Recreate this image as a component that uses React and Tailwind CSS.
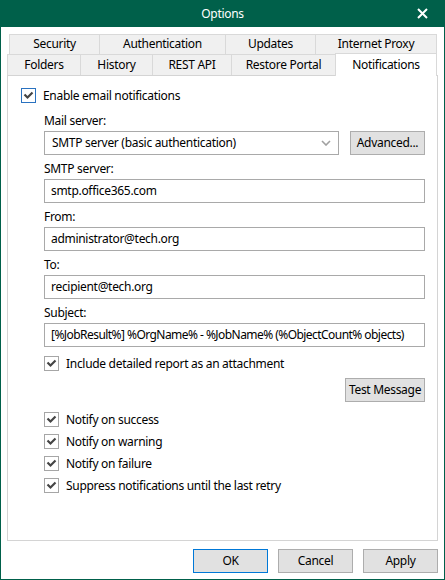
import React, { useState } from 'react';

const font = { fontFamily: '"Noto Sans", "Segoe UI", sans-serif' };

function Check({ checked, focused, onClick }) {
  return (
    <span
      onClick={onClick}
      className={`flex h-[15px] w-[15px] shrink-0 items-center justify-center border bg-white ${focused ? 'border-[#2a72c0]' : 'border-[#a6a6a6]'}`}
    >
      {checked && (
        <svg width="13" height="13" viewBox="0 0 13 13">
          <path d="M2.5 5.5 L5.5 8.5 L10.5 3.5" fill="none" stroke="#454545" strokeWidth="2.2" />
        </svg>
      )}
    </span>
  );
}

function CheckRow({ label, checked, onToggle, focused, className = '' }) {
  return (
    <div className={`flex h-[15px] items-center gap-[7px] ${className}`}>
      <Check checked={checked} focused={focused} onClick={onToggle} />
      <span className="leading-[15px] text-black">{label}</span>
    </div>
  );
}

function Field({ label, value, className = '', tight }) {
  return (
    <div className={className}>
      <div className="h-[16px] leading-[16px] text-black">{label}</div>
      <div
        className={`mt-[2px] flex h-[24px] items-center overflow-hidden whitespace-nowrap border border-[#a9a9a9] bg-white pl-[6px] text-black ${tight ? 'tracking-[-0.55px]' : ''}`}
      >
        {value}
      </div>
    </div>
  );
}

function WinButton({ children, primary, className = '' }) {
  return (
    <button
      className={`flex h-[24px] w-[75px] items-center justify-center border bg-[#e1e1e1] text-black ${primary ? 'border-[#0078d7]' : 'border-[#adadad]'} ${className}`}
    >
      {children}
    </button>
  );
}

const row1 = [
  ['Security', 90],
  ['Authentication', 126],
  ['Updates', 90],
  ['Internet Proxy', 122],
];
const row2 = [
  ['Folders', 73],
  ['History', 72],
  ['REST API', 79],
  ['Restore Portal', 104],
];

export default function App() {
  const [opts, setOpts] = useState({
    enable: true,
    attach: true,
    success: true,
    warning: true,
    failure: true,
    suppress: true,
  });
  const toggle = (k) => setOpts((o) => ({ ...o, [k]: !o[k] }));

  return (
    <div style={font} className="flex h-[580px] w-[445px] flex-col border-x border-b border-[#00604a] bg-white text-[12px] tracking-[-0.3px]">
      {/* title bar */}
      <div className="-mx-px flex h-[27px] shrink-0 items-center bg-[#00604a] text-white">
        <div className="flex-1 pl-[45px] text-center text-[12px]">Options</div>
        <div className="flex w-[45px] items-center justify-center">
          <svg width="11" height="11" viewBox="0 0 11 11">
            <path d="M1 1 L10 10 M10 1 L1 10" stroke="#fff" strokeWidth="2" />
          </svg>
        </div>
      </div>

      {/* tabs */}
      <div className="mt-[7px] flex h-[20px] pl-[8px]">
        {row1.map(([t, w], i) => (
          <div
            key={t}
            style={{ width: w }}
            className={`flex items-center justify-center border-t border-l border-[#d9d9d9] bg-[#f0f0f0] pb-px text-black ${i === row1.length - 1 ? 'border-r' : ''}`}
          >
            {t}
          </div>
        ))}
      </div>
      <div className="flex h-[21px] items-end pl-[6px]">
        {row2.map(([t, w]) => (
          <div
            key={t}
            style={{ width: w }}
            className="flex h-[21px] items-center justify-center border-t border-l border-[#d9d9d9] bg-[#f0f0f0] text-black"
          >
            {t}
          </div>
        ))}
        <div className="relative z-10 -mb-px flex h-[23px] w-[102px] items-start justify-center border-x border-t border-[#d9d9d9] bg-white pt-[2px] text-black">
          Notifications
        </div>
      </div>

      {/* panel */}
      <div className="ml-[6px] h-[466px] w-[431px] shrink-0 border border-[#d4d4d4] bg-white">
        <CheckRow
          className="mt-[12px] ml-[13px]"
          label="Enable email notifications"
          checked={opts.enable}
          focused
          onToggle={() => toggle('enable')}
        />

        <div className="mt-[10px] ml-[36px] w-[381px]">
          <div className="h-[16px] leading-[16px] text-black">Mail server:</div>
          <div className="mt-[2px] flex h-[24px] gap-[11px]">
            <div className="flex w-[295px] items-center justify-between border border-[#a9a9a9] bg-white pl-[7px] pr-[7px] text-black">
              <span>SMTP server (basic authentication)</span>
              <svg width="10" height="6" viewBox="0 0 10 6">
                <path d="M1 1 L5 5 L9 1" fill="none" stroke="#a0a0a0" strokeWidth="1.6" />
              </svg>
            </div>
            <WinButton className="w-[75px]">Advanced...</WinButton>
          </div>

          <Field className="mt-[6px]" label="SMTP server:" value="smtp.office365.com" />
          <Field className="mt-[6px]" label="From:" value="administrator@tech.org" />
          <Field className="mt-[6px]" label="To:" value="recipient@tech.org" />
          <Field
            className="mt-[6px]"
            tight
            label="Subject:"
            value="[%JobResult%] %OrgName% - %JobName% (%ObjectCount% objects)"
          />

          <CheckRow
            className="mt-[9px]"
            label="Include detailed report as an attachment"
            checked={opts.attach}
            onToggle={() => toggle('attach')}
          />

          <div className="mt-[7px] flex justify-end">
            <WinButton className="w-[80px]">Test Message</WinButton>
          </div>

          <div className="mt-[10px] flex flex-col gap-[7px]">
            <CheckRow label="Notify on success" checked={opts.success} onToggle={() => toggle('success')} />
            <CheckRow label="Notify on warning" checked={opts.warning} onToggle={() => toggle('warning')} />
            <CheckRow label="Notify on failure" checked={opts.failure} onToggle={() => toggle('failure')} />
            <CheckRow
              label="Suppress notifications until the last retry"
              checked={opts.suppress}
              onToggle={() => toggle('suppress')}
            />
          </div>
        </div>
      </div>

      {/* footer buttons */}
      <div className="mt-[8px] flex justify-end gap-[10px] pr-[6px]">
        <WinButton primary>OK</WinButton>
        <WinButton>Cancel</WinButton>
        <WinButton>Apply</WinButton>
      </div>
    </div>
  );
}
